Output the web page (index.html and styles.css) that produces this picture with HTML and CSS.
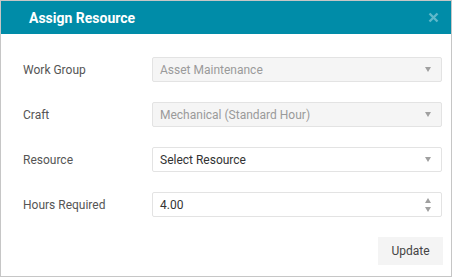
FILE: index.html
```html
<!DOCTYPE html>
<html lang="en">
<head>
    <meta charset="UTF-8">
    <meta name="viewport" content="width=device-width, initial-scale=1.0">
    <title>Assign Resource</title>
    <link rel="stylesheet" href="styles.css">
</head>
<body>

    <div class="dialog">
        <div class="dialog-header">
            <span class="dialog-title">Assign Resource</span>
            <svg class="close" width="11" height="11" viewBox="0 0 11 11">
                <path d="M1.5 1.5 L9.5 9.5 M9.5 1.5 L1.5 9.5" stroke="#5fb8ca" stroke-width="2.4"/>
            </svg>
        </div>
        <div class="dialog-body">
            <div class="row">
                <label>Work Group</label>
                <div class="field disabled">
                    <span>Asset Maintenance</span>
                    <span class="caret"></span>
                </div>
            </div>
            <div class="row">
                <label>Craft</label>
                <div class="field disabled">
                    <span>Mechanical (Standard Hour)</span>
                    <span class="caret"></span>
                </div>
            </div>
            <div class="row">
                <label>Resource</label>
                <div class="field">
                    <span>Select Resource</span>
                    <span class="caret"></span>
                </div>
            </div>
            <div class="row">
                <label>Hours Required</label>
                <div class="field">
                    <span>4.00</span>
                    <span class="spinner">
                        <span class="caret up"></span>
                        <span class="caret"></span>
                    </span>
                </div>
            </div>
            <div class="actions">
                <button>Update</button>
            </div>
        </div>
    </div>

</body>
</html>
```

FILE: styles.css
```css
body {
    margin: 0;
    font-family: Roboto, "Liberation Sans", sans-serif;
    background-color: #ffffff;
}

.dialog {
    width: 452px;
    height: 277px;
    box-sizing: border-box;
    border: 1px solid #c6c6c6;
    background-color: #ffffff;
}

.dialog-header {
    height: 33px;
    background-color: #008ca8;
    display: flex;
    align-items: center;
    justify-content: space-between;
    padding: 0 12px 0 28px;
}

.dialog-title {
    color: #ffffff;
    font-size: 14px;
    font-weight: bold;
}

.close {
    display: block;
}

.dialog-body {
    padding: 23px 9px 0 22px;
    display: flex;
    flex-direction: column;
    gap: 20px;
}

.row {
    display: flex;
    align-items: center;
}

.row label {
    width: 129px;
    font-size: 12px;
    color: #555555;
}

.field {
    flex: 1;
    height: 25px;
    box-sizing: border-box;
    border: 1px solid #e3e3e3;
    border-radius: 2px;
    padding: 0 8px 0 7px;
    display: flex;
    align-items: center;
    justify-content: space-between;
    font-size: 12px;
    color: #333333;
}

.field.disabled {
    background-color: #f5f5f5;
    color: #9a9a9a;
}

.caret {
    width: 0;
    height: 0;
    border-left: 3.5px solid transparent;
    border-right: 3.5px solid transparent;
    border-top: 5px solid #a0a0a0;
    margin-right: 2px;
}

.caret.up {
    border-top: none;
    border-bottom: 5px solid #a0a0a0;
}

.spinner {
    display: flex;
    flex-direction: column;
    gap: 4px;
}

.actions {
    display: flex;
    justify-content: flex-end;
}

button {
    font-family: Roboto, "Liberation Sans", sans-serif;
    font-size: 12px;
    color: #444444;
    background-color: #f4f4f4;
    border: none;
    width: 65px;
    height: 28px;
    margin-right: -1px;
}
```
